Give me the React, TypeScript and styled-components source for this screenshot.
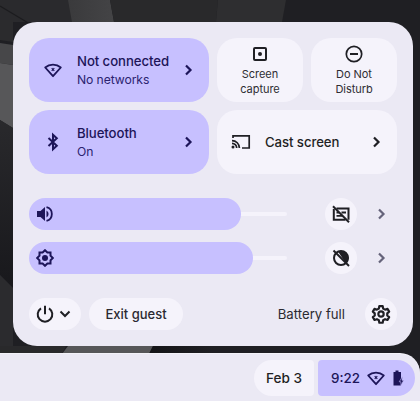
import React from 'react';
import styled, { createGlobalStyle } from 'styled-components';

const Global = createGlobalStyle`
  html, body { margin: 0; padding: 0; width: 420px; height: 401px; overflow: hidden; }
  body { font-family: Inter, "Noto Sans", sans-serif; color: #1f1f24; }
  * { box-sizing: border-box; }
`;

const Desktop = styled.div`
  width: 420px;
  height: 401px;
  display: flex;
  flex-direction: column;
  position: relative;
  background: #1e1e22;
`;
const Wallpaper = styled.svg`
  position: absolute;
  inset: 0;
`;
const PanelArea = styled.div`
  position: relative;
  height: 354px;
  padding: 22px 7px 0 13px;
`;
const Panel = styled.div`
  width: 400px;
  height: 324px;
  border-radius: 24px;
  background: #ebe9f4;
  padding: 16px;
  display: flex;
  flex-direction: column;
`;
const TileGrid = styled.div`
  display: grid;
  grid-template-columns: 180px 86px 86px;
  grid-template-rows: 64px 64px;
  gap: 8px;
`;
const FeatureTile = styled.div<{ $on?: boolean }>`
  border-radius: 20px;
  background: ${p => (p.$on ? '#c7c0ff' : '#f5f3fb')};
  color: ${p => (p.$on ? '#1d1559' : '#1f1f24')};
  display: flex;
  align-items: center;
  grid-column: ${p => (p.$on ? '1' : '2 / span 2')};
  padding: 0 10px 0 14px;
`;
const TileIcon = styled.span`
  width: 20px;
  height: 20px;
  display: flex;
  flex: none;
`;
const TileText = styled.div`
  margin-left: 14px;
  flex: 1;
  display: flex;
  flex-direction: column;
`;
const TileTitle = styled.div`
  font-size: 13.2px;
  line-height: 20px;
  font-weight: 500;
  letter-spacing: -0.08px;
  white-space: nowrap;
`;
const TileSub = styled.div`
  font-size: 12.2px;
  line-height: 18px;
  letter-spacing: -0.1px;
  color: #2b2370;
`;
const SmallTile = styled.div`
  border-radius: 20px;
  background: #f5f3fb;
  display: flex;
  flex-direction: column;
  align-items: center;
  padding-top: 6px;
  color: #1f1f24;
`;
const SmallLabel = styled.div`
  margin-top: 3px;
  font-size: 11px;
  line-height: 15px;
  letter-spacing: -0.05px;
  text-align: center;
  color: #2e2d33;
`;
const Sliders = styled.div`
  margin-top: 24px;
  display: flex;
  flex-direction: column;
  gap: 12px;
`;
const SliderRow = styled.div`
  height: 32px;
  display: flex;
  align-items: center;
`;
const SliderTrack = styled.div`
  width: 258px;
  height: 32px;
  position: relative;
  display: flex;
  align-items: center;
  &::before {
    content: '';
    position: absolute;
    left: 0;
    right: 0;
    top: 14px;
    height: 4px;
    border-radius: 2px;
    background: #f5f3fb;
  }
`;
const SliderFill = styled.div<{ $width: number }>`
  position: relative;
  width: ${p => p.$width}px;
  height: 32px;
  border-radius: 16px;
  background: #c7c0ff;
  padding-left: 7px;
  display: flex;
  align-items: center;
  color: #1d1559;
`;
const RoundButton = styled.button`
  width: 32px;
  height: 32px;
  border: 0;
  padding: 0;
  border-radius: 50%;
  background: #f5f3fb;
  display: flex;
  align-items: center;
  justify-content: center;
  color: #1f1f24;
  flex: none;
`;
const MuteButton = styled(RoundButton)`
  margin-left: 38px;
`;
const RowChevron = styled.span`
  margin-left: 15px;
  display: flex;
  color: #65637a;
`;
const Footer = styled.div`
  margin-top: 24px;
  height: 32px;
  display: flex;
  align-items: center;
`;
const PowerButton = styled.button`
  width: 52px;
  height: 32px;
  border: 0;
  border-radius: 16px;
  background: #f5f3fb;
  padding: 0 0 0 6px;
  display: flex;
  align-items: center;
  gap: 2px;
  color: #1f1f24;
`;
const ExitButton = styled.button`
  margin-left: 8px;
  width: 94px;
  height: 32px;
  border: 0;
  padding: 0;
  border-radius: 16px;
  background: #f5f3fb;
  font: 500 13px Inter, sans-serif;
  letter-spacing: 0;
  color: #2a2930;
`;
const BatteryText = styled.span`
  margin-left: auto;
  margin-right: 20px;
  font-size: 13.2px;
  color: #2a2930;
`;
const Shelf = styled.div`
  position: relative;
  flex: 1;
  background: #ebe9f4;
  border-top-right-radius: 20px;
  box-shadow: 0 -1px 0 #f3f2f8;
  display: flex;
  justify-content: flex-end;
  align-items: flex-start;
  padding: 6px 5px 0 0;
  gap: 4px;
`;
const DatePill = styled.div`
  width: 60px;
  height: 36px;
  border-radius: 18px 4px 4px 18px;
  background: #f5f3fb;
  font-size: 13.6px;
  font-weight: 500;
  color: #1f1f24;
  display: flex;
  align-items: center;
  justify-content: center;
`;
const TrayPill = styled.div`
  width: 97px;
  height: 36px;
  border-radius: 4px 18px 18px 4px;
  background: #c7c0ff;
  color: #1d1559;
  font-size: 13.4px;
  font-weight: 500;
  display: flex;
  align-items: center;
  padding-left: 13px;
`;
const TrayIcon = styled.span<{ $gap: number }>`
  display: flex;
  margin-left: ${p => p.$gap}px;
`;

const Wifi = () => (
  <svg width="20" height="20" viewBox="0 0 20 20" fill="none" stroke="currentColor" strokeWidth="1.800">
    <path d="M10 16.200 2.200 7.500C4.300 5.700 7 4.700 10 4.700s5.700 1 7.800 2.800Z" strokeLinejoin="round" />
    <path d="m8.700 8.200 2.600 2.600m0-2.600-2.600 2.600" strokeWidth="1.200" />
  </svg>
);
const Bluetooth = () => (
  <svg width="20" height="20" viewBox="0 0 20 20" fill="none" stroke="currentColor" strokeWidth="2">
    <path d="m5.500 6 8.300 7.700-3.800 3.500V2.800l3.800 3.500-8.300 7.700" />
  </svg>
);
const Chevron = () => (
  <svg width="20" height="20" viewBox="0 0 20 20" fill="none" stroke="currentColor" strokeWidth="2.200">
    <path d="m7 5.500 4.500 4.500-4.500 4.500" />
  </svg>
);
const Capture = () => (
  <svg width="20" height="20" viewBox="0 0 20 20" fill="none" stroke="currentColor" strokeWidth="2">
    <rect x="4" y="4" width="12" height="12" rx="1" />
    <circle cx="10" cy="10" r="2" fill="currentColor" stroke="none" />
  </svg>
);
const Dnd = () => (
  <svg width="20" height="20" viewBox="0 0 20 20" fill="none" stroke="currentColor" strokeWidth="1.700">
    <circle cx="10" cy="10" r="7.700" />
    <path d="M6 10h8" strokeWidth="2" />
  </svg>
);
const Cast = () => (
  <svg width="20" height="20" viewBox="0 0 20 20" fill="none" stroke="currentColor" strokeWidth="1.700">
    <path d="M2 6V3.800h16.200V16H11" />
    <path d="M1 8.600a7.400 7.400 0 0 1 7.400 7.400M1 11.300a4.700 4.700 0 0 1 4.700 4.700" />
    <circle cx="2" cy="15" r="1.500" fill="currentColor" stroke="none" />
  </svg>
);
const Volume = () => (
  <svg width="18" height="18" viewBox="0 0 18 18" fill="currentColor">
    <path d="M1 6h3.500L9 2v14l-4.500-4H1Z" />
    <path d="M10.500 5.500a4 4 0 0 1 0 7Z" />
    <path d="M10.500 2.200a7 7 0 0 1 0 13.600" fill="none" stroke="currentColor" strokeWidth="1.800" />
  </svg>
);
const Brightness = () => (
  <svg width="18" height="18" viewBox="0 0 18 18" fill="none" stroke="currentColor" strokeWidth="2">
    <path d="m9 1.200 2.400 2.300h3.100v3.100L16.800 9l-2.300 2.400v3.100h-3.100L9 16.800l-2.400-2.300H3.500v-3.100L1.200 9l2.300-2.400V3.500h3.100Z" />
    <circle cx="9" cy="9" r="3" fill="currentColor" stroke="none" />
  </svg>
);
const CaptionsOff = () => (
  <svg width="20" height="20" viewBox="0 0 20 20" fill="none" stroke="currentColor" strokeWidth="2">
    <path d="M5.500 4.500h12v11.200M14.500 15.700H2.800V5" />
    <path d="M5.500 8.500h2.500M10.500 8.500h4.500M5.500 11.800h6" strokeWidth="1.800" />
    <path d="m2 2.200 16 16" strokeWidth="2" />
  </svg>
);
const NightOff = () => (
  <svg width="20" height="20" viewBox="0 0 20 20" fill="none" stroke="currentColor" strokeWidth="2">
    <circle cx="10" cy="10" r="7" />
    <path d="M7 3.500a7.500 7.500 0 0 1 10.500 6.500c0 2-1 4-2.500 5.500Z" fill="currentColor" stroke="none" />
    <path d="m2.500 2.500 15.500 15.500" />
  </svg>
);
const Power = () => (
  <svg width="20" height="20" viewBox="0 0 20 20" fill="none" stroke="currentColor" strokeWidth="2">
    <path d="M6 4.300a7.300 7.300 0 1 0 8 0M10 1.800v8.400" />
  </svg>
);
const ChevronDown = () => (
  <svg width="16" height="16" viewBox="0 0 16 16" fill="none" stroke="currentColor" strokeWidth="2">
    <path d="m3.500 5.500 4.500 4.500 4.500-4.500" />
  </svg>
);
const Gear = () => (
  <svg width="20" height="20" viewBox="0 0 24 24" fill="none" stroke="currentColor" strokeWidth="2.600" strokeLinejoin="round">
    <path d="M10 2.500h4l.6 3 2.300 1.300 2.900-1 2 3.400-2.300 2v2.600l2.300 2-2 3.400-2.900-1-2.300 1.300-.6 3h-4l-.6-3-2.300-1.300-2.900 1-2-3.400 2.300-2v-2.600l-2.300-2 2-3.400 2.900 1 2.300-1.300Z" />
    <circle cx="12" cy="12" r="3.200" />
  </svg>
);
const Battery = () => (
  <svg width="11" height="16" viewBox="0 0 11 16" fill="currentColor">
    <path d="M2.500.5h3V2H8v13.500H.5V2h2Z" />
    <path d="M9.500 6.500 6.200 11.800h1.700v3.700l2.800-5.200H9Z" stroke="#c7c0ff" strokeWidth=".6" />
  </svg>
);

export default function App() {
  return (
    <Desktop>
      <Global />
      <Wallpaper width="420" height="401" viewBox="0 0 420 401">
        <defs>
          <linearGradient id="band" x1="0" x2="1" y1="0" y2="0">
            <stop offset="0" stopColor="#3a3a3c" />
            <stop offset="1" stopColor="#444446" />
          </linearGradient>
          <linearGradient id="side" x1="0" x2="0" y1="0" y2="1">
            <stop offset="0" stopColor="#29292c" />
            <stop offset="1" stopColor="#18181c" />
          </linearGradient>
          <linearGradient id="ground" x1="0" x2="1" y1="0" y2="0">
            <stop offset="0" stopColor="#141417" />
            <stop offset="1" stopColor="#1f1f23" />
          </linearGradient>
        </defs>
        <rect width="420" height="401" fill="#1f1f23" />
        <path d="M0 0h69l4 22H0Z" fill="#2a2a2d" />
        <path d="m0 6 30 18" stroke="#1c1c1f" strokeWidth="1.200" fill="none" />
        <path d="M68 0h42l4 22H72Z" fill="url(#band)" />
        <path d="M110 0h108l-2 22H114Z" fill="#29292b" />
        <path d="M218 0h68l-4 22h-66Z" fill="#2e2e30" />
        <path d="M0 20h13v22L0 40Z" fill="#2b2b2d" />
        <path d="M0 43 13 45v20L0 63Z" fill="#474749" />
        <path d="M0 63l13 2v63L0 120Z" fill="#575759" />
        <path d="M0 120l13 8v160L0 275Z" fill="url(#side)" />
        <path d="M0 275l13 13v66H0Z" fill="#2b2b2e" />
        <path d="M0 346h66l-4 8H0Z" fill="#29292b" />
        <path d="M68 346h85l-4 8H62Z" fill="#565658" />
        <path d="M153 346h60v8h-64Z" fill="url(#ground)" />
        <path d="M213 346h207v8H213Z" fill="#1f1f23" />
      </Wallpaper>
      <PanelArea>
        <Panel>
          <TileGrid>
            <FeatureTile $on>
              <TileIcon><Wifi /></TileIcon>
              <TileText>
                <TileTitle>Not connected</TileTitle>
                <TileSub>No networks</TileSub>
              </TileText>
              <TileIcon><Chevron /></TileIcon>
            </FeatureTile>
            <SmallTile>
              <TileIcon><Capture /></TileIcon>
              <SmallLabel>Screen<br />capture</SmallLabel>
            </SmallTile>
            <SmallTile>
              <TileIcon><Dnd /></TileIcon>
              <SmallLabel>Do Not<br />Disturb</SmallLabel>
            </SmallTile>
            <FeatureTile $on>
              <TileIcon><Bluetooth /></TileIcon>
              <TileText>
                <TileTitle>Bluetooth</TileTitle>
                <TileSub>On</TileSub>
              </TileText>
              <TileIcon><Chevron /></TileIcon>
            </FeatureTile>
            <FeatureTile>
              <TileIcon><Cast /></TileIcon>
              <TileText>
                <TileTitle>Cast screen</TileTitle>
              </TileText>
              <TileIcon><Chevron /></TileIcon>
            </FeatureTile>
          </TileGrid>
          <Sliders>
            <SliderRow>
              <SliderTrack>
                <SliderFill $width={212}><Volume /></SliderFill>
              </SliderTrack>
              <MuteButton><CaptionsOff /></MuteButton>
              <RowChevron><Chevron /></RowChevron>
            </SliderRow>
            <SliderRow>
              <SliderTrack>
                <SliderFill $width={224}><Brightness /></SliderFill>
              </SliderTrack>
              <MuteButton><NightOff /></MuteButton>
              <RowChevron><Chevron /></RowChevron>
            </SliderRow>
          </Sliders>
          <Footer>
            <PowerButton><Power /><ChevronDown /></PowerButton>
            <ExitButton>Exit guest</ExitButton>
            <BatteryText>Battery full</BatteryText>
            <RoundButton><Gear /></RoundButton>
          </Footer>
        </Panel>
      </PanelArea>
      <Shelf>
        <DatePill>Feb 3</DatePill>
        <TrayPill>
          9:22
          <TrayIcon $gap={6}><Wifi /></TrayIcon>
          <TrayIcon $gap={7}><Battery /></TrayIcon>
        </TrayPill>
      </Shelf>
    </Desktop>
  );
}
